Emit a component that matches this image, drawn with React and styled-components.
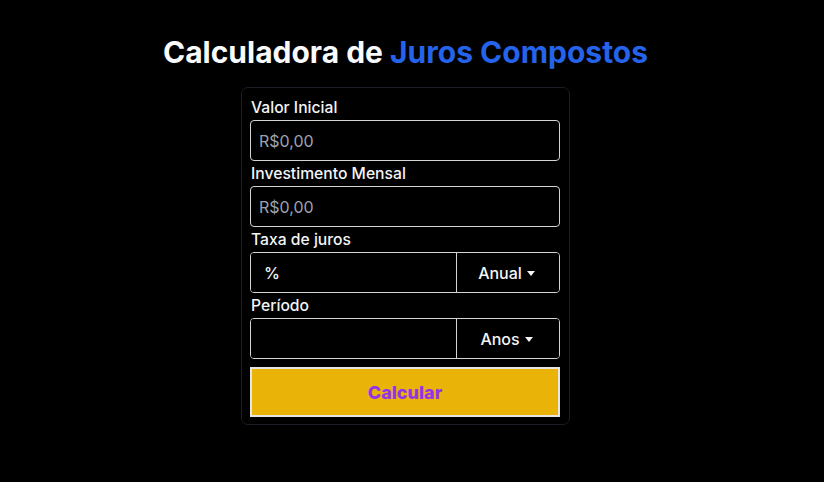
import React from "react";
import styled, { createGlobalStyle } from "styled-components";

const Global = createGlobalStyle`
  html, body { margin: 0; padding: 0; background: #000; }
  body { font-family: Inter, "Noto Sans", sans-serif; color: #f3f4f6; }
  * { box-sizing: border-box; }
`;

const Page = styled.main`
  width: calc(100% - 13px);
  min-height: 482px;
  display: flex;
  flex-direction: column;
  align-items: center;
  padding-top: 33px;
`;

const Title = styled.h1`
  margin: 0 0 16px;
  font-size: 30px;
  line-height: 38px;
  font-weight: 700;
  color: #f8fafc;
`;

const Accent = styled.span`
  color: #2563eb;
`;

const Card = styled.form`
  width: 329px;
  border: 1px solid #1c1c26;
  border-radius: 7px;
  padding: 8px 9px 7px 8px;
  display: flex;
  flex-direction: column;
`;

const Field = styled.div`
  display: flex;
  flex-direction: column;
  margin-bottom: 1px;
`;

const Label = styled.label`
  font-size: 15.7px;
  line-height: 24px;
  font-weight: 500;
  color: #f3f4f6;
  padding-left: 1px;
`;

const Input = styled.input`
  height: 41px;
  width: 100%;
  background: #000;
  border: 1px solid #d4d4d8;
  border-radius: 4px;
  padding: 0 8px;
  font-family: inherit;
  font-size: 16px;
  color: #f3f4f6;
  outline: none;
  &::placeholder { color: #9ca3af; }
`;

const Group = styled.div`
  height: 41px;
  display: grid;
  grid-template-columns: 206px 1fr;
  border: 1px solid #d4d4d8;
  border-radius: 4px;
  overflow: hidden;
`;

const GroupInput = styled.input`
  background: #000;
  border: none;
  border-right: 1px solid #d4d4d8;
  padding: 0 13px;
  font-family: inherit;
  font-size: 16px;
  font-weight: 500;
  color: #f3f4f6;
  outline: none;
  &::placeholder { color: #f3f4f6; }
`;

const Select = styled.button`
  background: #000;
  border: none;
  color: #f3f4f6;
  font-family: inherit;
  font-size: 16px;
  font-weight: 500;
  display: flex;
  align-items: center;
  justify-content: center;
  gap: 5px;
  padding: 0 3px 0 0;
  cursor: pointer;
`;

const Caret = styled.span`
  width: 0;
  height: 0;
  border-left: 4.5px solid transparent;
  border-right: 4.5px solid transparent;
  border-top: 5px solid #f3f4f6;
  margin-top: 1px;
`;

const Submit = styled.button`
  margin-top: 7px;
  height: 50px;
  width: 100%;
  background: #eab308;
  border: 2px solid #e7e5e4;
  border-radius: 0;
  color: #9333ea;
  font-family: inherit;
  font-size: 18px;
  font-weight: 800;
  cursor: pointer;
`;

export default function App() {
  return (
    <>
      <Global />
      <Page>
        <Title>
          Calculadora de <Accent>Juros Compostos</Accent>
        </Title>
        <Card onSubmit={(e) => e.preventDefault()}>
          <Field>
            <Label>Valor Inicial</Label>
            <Input placeholder="R$0,00" />
          </Field>
          <Field>
            <Label>Investimento Mensal</Label>
            <Input placeholder="R$0,00" />
          </Field>
          <Field>
            <Label>Taxa de juros</Label>
            <Group>
              <GroupInput placeholder="%" />
              <Select type="button">
                Anual <Caret />
              </Select>
            </Group>
          </Field>
          <Field>
            <Label>Período</Label>
            <Group>
              <GroupInput />
              <Select type="button">
                Anos <Caret />
              </Select>
            </Group>
          </Field>
          <Submit type="submit">Calcular</Submit>
        </Card>
      </Page>
    </>
  );
}
